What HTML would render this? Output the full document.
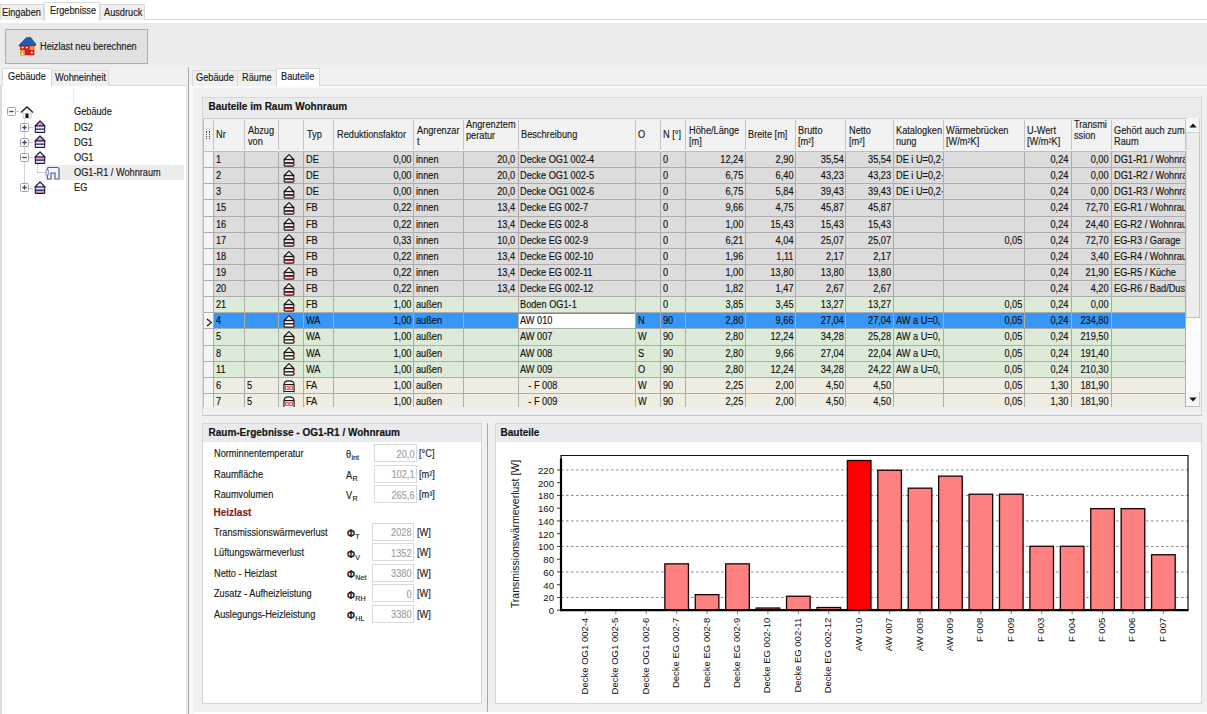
<!DOCTYPE html><html><head><meta charset="utf-8"><style>
*{margin:0;padding:0;box-sizing:border-box}
html,body{width:1207px;height:714px;overflow:hidden;background:#fff}
body{position:relative;font-family:"Liberation Sans",sans-serif;font-size:9.2px;color:#1a1a1a}
div{position:absolute}
.t{white-space:nowrap;line-height:12px;-webkit-text-stroke-width:0.15px;font-size:10.0px;transform:scaleX(0.92);transform-origin:0 0}
.r{transform-origin:100% 0}
.num{}
.ns{transform:none}
.b{font-weight:bold;font-size:10px;color:#111}
svg{position:absolute}
</style></head><body><div style="left:0px;top:19px;width:1207px;height:1px;background:#d9d9d9"></div>
<div style="left:0px;top:4px;width:44px;height:16px;background:#f0f0f0;border:1px solid #d9d9d9;border-bottom:none"></div>
<div style="left:100px;top:4px;width:45px;height:16px;background:#f0f0f0;border:1px solid #d9d9d9;border-bottom:none"></div>
<div style="left:44px;top:2px;width:56px;height:19px;background:#fff;border:1px solid #d9d9d9;border-bottom:none"></div>
<div class="t " style="left:2px;top:7px;">Eingaben</div>
<div class="t " style="left:49.5px;top:4.8px;">Ergebnisse</div>
<div class="t " style="left:104px;top:7px;">Ausdruck</div>
<div style="left:0px;top:22.5px;width:1207px;height:43px;background:#ebebee"></div>
<div style="left:0px;top:65px;width:1207px;height:3px;background:#efeff0"></div>
<div style="left:5px;top:29px;width:143px;height:35px;background:#e1e1e1;border:1px solid #adadad"></div>
<div class="t " style="left:40px;top:40.5px;">Heizlast neu berechnen</div>
<svg style="left:18px;top:36px" width="19" height="20" viewBox="0 0 19 20">
<rect x="2" y="9" width="14.4" height="10.3" fill="#d61c26"/>
<rect x="11.6" y="9" width="4.8" height="5" fill="#e8962a"/>
<rect x="2" y="14" width="4.8" height="5.3" fill="#e9a235"/>
<path d="M0.8 9.6 L7.6 2.6 Q8.6 0.8 10 2 Q11.6 0.6 13 2 L17.8 8.2 L17.4 9.6 Z" fill="#1f5cb4" stroke="#153f85" stroke-width="0.8"/>
<circle cx="4.6" cy="11.4" r="1" fill="#fff"/><circle cx="8.8" cy="11.4" r="1" fill="#fff"/><circle cx="13.8" cy="16.4" r="1" fill="#fff"/>
<path d="M4.4 15.5 L3.4 19 H5.4Z" fill="#fff4d8"/>
</svg>
<div style="left:0px;top:68px;width:187px;height:18px;background:#f0f0f0"></div>
<div style="left:0px;top:85px;width:187px;height:629px;background:#fff;border-left:2px solid #dcdcdc"></div>
<div style="left:0px;top:85px;width:187px;height:1px;background:#dadada"></div>
<div style="left:51px;top:70px;width:58px;height:16px;background:#f0f0f0;border:1px solid #d9d9d9;border-bottom:none"></div>
<div style="left:2px;top:68px;width:50px;height:18px;background:#fff;border:1px solid #d9d9d9;border-bottom:none"></div>
<div class="t " style="left:8px;top:71px;">Gebäude</div>
<div class="t " style="left:55px;top:72px;">Wohneinheit</div>
<div style="left:73px;top:88px;width:1px;height:16px;background:#ececec"></div>
<div style="left:187px;top:66px;width:7px;height:648px;background:#f0f0f0"></div>
<div style="left:188px;top:67px;width:1px;height:647px;background:#a8a8a8"></div>
<div style="left:186px;top:85px;width:1px;height:629px;background:#e4e4e4"></div>
<div style="left:190px;top:85px;width:3px;height:629px;background:#fbfbfb"></div>
<div style="left:45px;top:165px;width:139px;height:15px;background:#ececec"></div>
<div style="left:23.5px;top:116px;width:1px;height:72px;background:#d4d4d4"></div>
<div class="t " style="left:74px;top:106.2px;">Gebäude</div>
<div class="t " style="left:74px;top:121.7px;">DG2</div>
<div class="t " style="left:74px;top:136.7px;">DG1</div>
<div class="t " style="left:74px;top:152.0px;">OG1</div>
<div class="t " style="left:74px;top:167.2px;">OG1-R1 / Wohnraum</div>
<div class="t " style="left:74px;top:182.39999999999998px;">EG</div>
<svg style="left:6.5px;top:107.0px" width="9" height="9" viewBox="0 0 9 9"><rect x="0.5" y="0.5" width="8" height="8" rx="1" fill="#fafafa" stroke="#a4a4a4" stroke-width="1"/><path d="M2.3 4.5h4.4" stroke="#45457a" stroke-width="1.3"/></svg>
<svg style="left:19.5px;top:122.5px" width="9" height="9" viewBox="0 0 9 9"><rect x="0.5" y="0.5" width="8" height="8" rx="1" fill="#fafafa" stroke="#a4a4a4" stroke-width="1"/><path d="M2.3 4.5h4.4 M4.5 2.3v4.4" stroke="#45457a" stroke-width="1.3"/></svg>
<div style="left:29px;top:127px;width:4px;height:1px;background:#c8c8c8"></div>
<svg style="left:19.5px;top:137.5px" width="9" height="9" viewBox="0 0 9 9"><rect x="0.5" y="0.5" width="8" height="8" rx="1" fill="#fafafa" stroke="#a4a4a4" stroke-width="1"/><path d="M2.3 4.5h4.4 M4.5 2.3v4.4" stroke="#45457a" stroke-width="1.3"/></svg>
<div style="left:29px;top:142px;width:4px;height:1px;background:#c8c8c8"></div>
<svg style="left:19.5px;top:152.8px" width="9" height="9" viewBox="0 0 9 9"><rect x="0.5" y="0.5" width="8" height="8" rx="1" fill="#fafafa" stroke="#a4a4a4" stroke-width="1"/><path d="M2.3 4.5h4.4" stroke="#45457a" stroke-width="1.3"/></svg>
<div style="left:29px;top:157.3px;width:4px;height:1px;background:#c8c8c8"></div>
<svg style="left:19.5px;top:183.2px" width="9" height="9" viewBox="0 0 9 9"><rect x="0.5" y="0.5" width="8" height="8" rx="1" fill="#fafafa" stroke="#a4a4a4" stroke-width="1"/><path d="M2.3 4.5h4.4 M4.5 2.3v4.4" stroke="#45457a" stroke-width="1.3"/></svg>
<div style="left:29px;top:187.7px;width:4px;height:1px;background:#c8c8c8"></div>
<div style="left:15px;top:111px;width:4px;height:1px;background:#c8c8c8"></div>
<div style="left:37px;top:164px;width:0px;height:8px;border-left:1px dotted #b8b8b8"></div>
<div style="left:37px;top:172px;width:8px;height:1px;background:#c8c8c8"></div>
<svg style="left:20px;top:106px" width="14" height="13" viewBox="0 0 14 13"><path d="M1 6.5 L7 1 L13 6.5" fill="none" stroke="#222" stroke-width="1.4"/><path d="M3 6 V12 H11 V6" fill="#f4f4f4" stroke="#ccc"/><rect x="5.5" y="7.5" width="3" height="4.5" fill="#111"/></svg>
<svg style="left:34px;top:120.4px" width="12" height="13" viewBox="0 0 12 13"><path d="M1 6 L6 1 L11 6 Z" fill="#e9a0ae" stroke="#1c1c50" stroke-width="1.2" stroke-linejoin="round"/><rect x="1.3" y="6" width="9.4" height="3.2" rx="0.5" fill="#dfe6f6" stroke="#1c1c50" stroke-width="1.1"/><rect x="1.3" y="9.2" width="9.4" height="3.2" rx="0.5" fill="#fff" stroke="#1c1c50" stroke-width="1.1"/></svg>
<svg style="left:34px;top:135.4px" width="12" height="13" viewBox="0 0 12 13"><path d="M1 6 L6 1 L11 6 Z" fill="#e9a0ae" stroke="#1c1c50" stroke-width="1.2" stroke-linejoin="round"/><rect x="1.3" y="6" width="9.4" height="3.2" rx="0.5" fill="#dfe6f6" stroke="#1c1c50" stroke-width="1.1"/><rect x="1.3" y="9.2" width="9.4" height="3.2" rx="0.5" fill="#fff" stroke="#1c1c50" stroke-width="1.1"/></svg>
<svg style="left:34px;top:150.7px" width="12" height="13" viewBox="0 0 12 13"><path d="M1 6 L6 1 L11 6 Z" fill="#fff" stroke="#1c1c50" stroke-width="1.2" stroke-linejoin="round"/><rect x="1.3" y="6" width="9.4" height="3.2" rx="0.5" fill="#e6a2b6" stroke="#1c1c50" stroke-width="1.1"/><rect x="1.3" y="9.2" width="9.4" height="3.2" rx="0.5" fill="#f2eaf6" stroke="#1c1c50" stroke-width="1.1"/></svg>
<svg style="left:34px;top:181.1px" width="12" height="13" viewBox="0 0 12 13"><path d="M1 6 L6 1 L11 6 Z" fill="#fff" stroke="#1c1c50" stroke-width="1.2" stroke-linejoin="round"/><rect x="1.3" y="6" width="9.4" height="3.2" rx="0.5" fill="#d7dff3" stroke="#1c1c50" stroke-width="1.1"/><rect x="1.3" y="9.2" width="9.4" height="3.2" rx="0.5" fill="#e6a2b6" stroke="#1c1c50" stroke-width="1.1"/></svg>
<svg style="left:45px;top:166px" width="15" height="14" viewBox="0 0 15 14"><path d="M3 1.5 H12 Q14 1.5 14 3.5 V13 H10 V7 H6 V13 H2.5 V3.5 Q2.5 1.5 3 1.5Z" fill="#f4f6fb" stroke="#4a5a8a" stroke-width="1.1"/><rect x="1" y="4" width="2.5" height="5" fill="#dde3f0" stroke="#8090b0" stroke-width="0.8"/></svg>
<div style="left:193px;top:68px;width:1014px;height:18px;background:#f0f0f0"></div>
<div style="left:193px;top:85px;width:1014px;height:1px;background:#d9d9d9"></div>
<div style="left:193px;top:86px;width:1014px;height:2px;background:#fafafa"></div>
<div style="left:193px;top:88px;width:1014px;height:624px;background:#f0f0f0"></div>
<div style="left:191.5px;top:70px;width:46px;height:16px;background:#f0f0f0;border:1px solid #d9d9d9;border-bottom:none"></div>
<div style="left:237px;top:70px;width:40px;height:16px;background:#f0f0f0;border:1px solid #d9d9d9;border-bottom:none"></div>
<div style="left:276px;top:68px;width:44px;height:18px;background:#fff;border:1px solid #d9d9d9;border-bottom:none"></div>
<div class="t " style="left:196px;top:72.3px;">Gebäude</div>
<div class="t " style="left:242px;top:72.3px;">Räume</div>
<div class="t " style="left:281px;top:71px;">Bauteile</div>
<div style="left:202px;top:97px;width:999.5px;height:318.5px;background:#f0f0f0;border:1px solid #d6d6d6"></div>
<div style="left:203px;top:98px;width:997.5px;height:19.5px;background:#ebebee"></div>
<div class="t ns" style="left:208.5px;top:101.1px;font-weight:bold;font-size:10px;color:#111">Bauteile im Raum Wohnraum</div>
<div style="left:203px;top:117.5px;width:996.5px;height:289.3px;overflow:hidden;background:#fff">
<div style="left:0;top:0;width:982.5999999999999px;height:34.5px;background:#f2f2f2;border-top:1px solid #c8c8c8"></div>
<div style="left:0px;top:33.5px;width:10.599999999999994px;height:1px;background:#bdbdbd"></div>
<div style="left:10.099999999999994px;top:2px;width:1px;height:30.5px;background:#c4c4c4"></div>
<div style="left:10.599999999999994px;top:33.5px;width:31.099999999999994px;height:1px;background:#bdbdbd"></div>
<div style="left:41.19999999999999px;top:2px;width:1px;height:30.5px;background:#c4c4c4"></div>
<div class="t" style="left:13.399999999999995px;top:11.6px;line-height:11px;color:#1a1a1a">Nr</div>
<div style="left:41.69999999999999px;top:33.5px;width:33.80000000000001px;height:1px;background:#bdbdbd"></div>
<div style="left:75.0px;top:2px;width:1px;height:30.5px;background:#c4c4c4"></div>
<div class="t" style="left:44.499999999999986px;top:7.4px;line-height:11px;color:#1a1a1a">Abzug<br>von</div>
<div style="left:75.5px;top:33.5px;width:25.30000000000001px;height:1px;background:#bdbdbd"></div>
<div style="left:100.30000000000001px;top:2px;width:1px;height:30.5px;background:#c4c4c4"></div>
<div style="left:100.80000000000001px;top:33.5px;width:30.0px;height:1px;background:#bdbdbd"></div>
<div style="left:130.3px;top:2px;width:1px;height:30.5px;background:#c4c4c4"></div>
<div class="t" style="left:103.60000000000001px;top:11.6px;line-height:11px;color:#1a1a1a">Typ</div>
<div style="left:130.8px;top:33.5px;width:79.89999999999998px;height:1px;background:#bdbdbd"></div>
<div style="left:210.2px;top:2px;width:1px;height:30.5px;background:#c4c4c4"></div>
<div class="t" style="left:133.60000000000002px;top:11.6px;line-height:11px;color:#1a1a1a">Reduktionsfaktor</div>
<div style="left:210.7px;top:33.5px;width:49.69999999999999px;height:1px;background:#bdbdbd"></div>
<div style="left:259.9px;top:2px;width:1px;height:30.5px;background:#c4c4c4"></div>
<div class="t" style="left:213.5px;top:7.4px;line-height:11px;color:#1a1a1a">Angrenzar<br>t</div>
<div style="left:260.4px;top:33.5px;width:54.60000000000002px;height:1px;background:#bdbdbd"></div>
<div style="left:314.5px;top:2px;width:1px;height:30.5px;background:#c4c4c4"></div>
<div class="t" style="left:263.2px;top:1.4px;line-height:11px;color:#1a1a1a">Angrenztem<br>peratur</div>
<div style="left:315px;top:33.5px;width:117.39999999999998px;height:1px;background:#bdbdbd"></div>
<div style="left:431.9px;top:2px;width:1px;height:30.5px;background:#c4c4c4"></div>
<div class="t" style="left:317.8px;top:11.6px;line-height:11px;color:#1a1a1a">Beschreibung</div>
<div style="left:432.4px;top:33.5px;width:25.100000000000023px;height:1px;background:#bdbdbd"></div>
<div style="left:457.0px;top:2px;width:1px;height:30.5px;background:#c4c4c4"></div>
<div class="t" style="left:435.2px;top:11.6px;line-height:11px;color:#1a1a1a">O</div>
<div style="left:457.5px;top:33.5px;width:25.200000000000045px;height:1px;background:#bdbdbd"></div>
<div style="left:482.20000000000005px;top:2px;width:1px;height:30.5px;background:#c4c4c4"></div>
<div class="t" style="left:460.3px;top:11.6px;line-height:11px;color:#1a1a1a">N [°]</div>
<div style="left:482.70000000000005px;top:33.5px;width:59.799999999999955px;height:1px;background:#bdbdbd"></div>
<div style="left:542.0px;top:2px;width:1px;height:30.5px;background:#c4c4c4"></div>
<div class="t" style="left:485.50000000000006px;top:7.4px;line-height:11px;color:#1a1a1a">Höhe/Länge<br>[m]</div>
<div style="left:542.5px;top:33.5px;width:50.0px;height:1px;background:#bdbdbd"></div>
<div style="left:592.0px;top:2px;width:1px;height:30.5px;background:#c4c4c4"></div>
<div class="t" style="left:545.3px;top:11.6px;line-height:11px;color:#1a1a1a">Breite [m]</div>
<div style="left:592.5px;top:33.5px;width:50.299999999999955px;height:1px;background:#bdbdbd"></div>
<div style="left:642.3px;top:2px;width:1px;height:30.5px;background:#c4c4c4"></div>
<div class="t" style="left:595.3px;top:7.4px;line-height:11px;color:#1a1a1a">Brutto<br>[m²]</div>
<div style="left:642.8px;top:33.5px;width:47.60000000000002px;height:1px;background:#bdbdbd"></div>
<div style="left:689.9px;top:2px;width:1px;height:30.5px;background:#c4c4c4"></div>
<div class="t" style="left:645.5999999999999px;top:7.4px;line-height:11px;color:#1a1a1a">Netto<br>[m²]</div>
<div style="left:690.4px;top:33.5px;width:50.200000000000045px;height:1px;background:#bdbdbd"></div>
<div style="left:740.1px;top:2px;width:1px;height:30.5px;background:#c4c4c4"></div>
<div class="t" style="left:693.1999999999999px;top:7.4px;line-height:11px;color:#1a1a1a">Katalogken<br>nung</div>
<div style="left:740.6px;top:33.5px;width:80.80000000000007px;height:1px;background:#bdbdbd"></div>
<div style="left:820.9000000000001px;top:2px;width:1px;height:30.5px;background:#c4c4c4"></div>
<div class="t" style="left:743.4px;top:7.4px;line-height:11px;color:#1a1a1a">Wärmebrücken<br>[W/m²K]</div>
<div style="left:821.4000000000001px;top:33.5px;width:46.899999999999864px;height:1px;background:#bdbdbd"></div>
<div style="left:867.8px;top:2px;width:1px;height:30.5px;background:#c4c4c4"></div>
<div class="t" style="left:824.2px;top:7.4px;line-height:11px;color:#1a1a1a">U-Wert<br>[W/m²K]</div>
<div style="left:868.3px;top:33.5px;width:40.100000000000136px;height:1px;background:#bdbdbd"></div>
<div style="left:907.9000000000001px;top:2px;width:1px;height:30.5px;background:#c4c4c4"></div>
<div class="t" style="left:871.0999999999999px;top:1.4px;line-height:11px;color:#1a1a1a">Transmi<br>ssion</div>
<div style="left:908.4000000000001px;top:33.5px;width:74.19999999999982px;height:1px;background:#bdbdbd"></div>
<div style="left:982.0999999999999px;top:2px;width:1px;height:30.5px;background:#c4c4c4"></div>
<div class="t" style="left:911.2px;top:7.4px;line-height:11px;color:#1a1a1a">Gehört auch zum<br>Raum</div>
<div style="left:2.5px;top:13px;width:4px;height:8px;border-left:1.5px dotted #444;border-right:1.5px dotted #444"></div>
<div style="left:0;top:34.5px;width:10.599999999999994px;height:16.13px;background:#f5f5f5"></div>
<div style="left:10.599999999999994px;top:34.5px;width:971.9999999999999px;height:16.13px;background:#dcdcdc"></div>
<div style="left:0;top:49.629999999999995px;width:982.5999999999999px;height:1px;background:#adadad"></div>
<div class="t num" style="left:12.799999999999994px;width:31.63043478260869px;overflow:hidden;top:36.5px;color:#111">1</div>
<div style="left:79.05000000000001px;top:35.3px"><svg width="14" height="14" viewBox="0 0 13 13"><path d="M2 6 L6.5 1.5 L11 6 Z" fill="#fff" stroke="#1a1a1a" stroke-width="1.1" stroke-linejoin="round"/><rect x="2" y="6.2" width="9" height="2.8" rx="0.8" fill="#fff" stroke="#1a1a1a" stroke-width="1.05"/><rect x="2" y="9.2" width="9" height="3" rx="0.8" fill="#ffd4d4" stroke="#1a1a1a" stroke-width="1.05"/><path d="M2.6 9.6 H10.4" stroke="#b01010" stroke-width="1"/></svg></div>
<div class="t" style="left:103.00000000000001px;width:30.434782608695652px;overflow:hidden;top:36.5px;color:#111">DE</div>
<div class="t r num" style="left:130.8px;width:77.39999999999998px;text-align:right;top:36.5px;color:#111">0,00</div>
<div class="t" style="left:212.89999999999998px;width:51.84782608695651px;overflow:hidden;top:36.5px;color:#111">innen</div>
<div class="t r num" style="left:260.4px;width:52.10000000000002px;text-align:right;top:36.5px;color:#111">20,0</div>
<div class="t" style="left:317.2px;width:125.43478260869563px;overflow:hidden;top:36.5px;color:#111">Decke OG1 002-4</div>
<div class="t num" style="left:459.7px;width:25.217391304347874px;overflow:hidden;top:36.5px;color:#111">0</div>
<div class="t r num" style="left:482.70000000000005px;width:57.299999999999955px;text-align:right;top:36.5px;color:#111">12,24</div>
<div class="t r num" style="left:542.5px;width:47.5px;text-align:right;top:36.5px;color:#111">2,90</div>
<div class="t r num" style="left:592.5px;width:47.799999999999955px;text-align:right;top:36.5px;color:#111">35,54</div>
<div class="t r num" style="left:642.8px;width:45.10000000000002px;text-align:right;top:36.5px;color:#111">35,54</div>
<div class="t" style="left:692.6px;width:52.391304347826136px;overflow:hidden;top:36.5px;color:#111">DE i U=0,2·</div>
<div class="t r num" style="left:821.4000000000001px;width:44.399999999999864px;text-align:right;top:36.5px;color:#111">0,24</div>
<div class="t r num" style="left:868.3px;width:37.600000000000136px;text-align:right;top:36.5px;color:#111">0,00</div>
<div class="t" style="left:910.6000000000001px;width:78.47826086956502px;overflow:hidden;top:36.5px;color:#111">DG1-R1 / Wohnra</div>
<div style="left:0;top:50.629999999999995px;width:10.599999999999994px;height:16.13px;background:#f5f5f5"></div>
<div style="left:10.599999999999994px;top:50.629999999999995px;width:971.9999999999999px;height:16.13px;background:#dcdcdc"></div>
<div style="left:0;top:65.75999999999999px;width:982.5999999999999px;height:1px;background:#adadad"></div>
<div class="t num" style="left:12.799999999999994px;width:31.63043478260869px;overflow:hidden;top:52.629999999999995px;color:#111">2</div>
<div style="left:79.05000000000001px;top:51.42999999999999px"><svg width="14" height="14" viewBox="0 0 13 13"><path d="M2 6 L6.5 1.5 L11 6 Z" fill="#fff" stroke="#1a1a1a" stroke-width="1.1" stroke-linejoin="round"/><rect x="2" y="6.2" width="9" height="2.8" rx="0.8" fill="#fff" stroke="#1a1a1a" stroke-width="1.05"/><rect x="2" y="9.2" width="9" height="3" rx="0.8" fill="#ffd4d4" stroke="#1a1a1a" stroke-width="1.05"/><path d="M2.6 9.6 H10.4" stroke="#b01010" stroke-width="1"/></svg></div>
<div class="t" style="left:103.00000000000001px;width:30.434782608695652px;overflow:hidden;top:52.629999999999995px;color:#111">DE</div>
<div class="t r num" style="left:130.8px;width:77.39999999999998px;text-align:right;top:52.629999999999995px;color:#111">0,00</div>
<div class="t" style="left:212.89999999999998px;width:51.84782608695651px;overflow:hidden;top:52.629999999999995px;color:#111">innen</div>
<div class="t r num" style="left:260.4px;width:52.10000000000002px;text-align:right;top:52.629999999999995px;color:#111">20,0</div>
<div class="t" style="left:317.2px;width:125.43478260869563px;overflow:hidden;top:52.629999999999995px;color:#111">Decke OG1 002-5</div>
<div class="t num" style="left:459.7px;width:25.217391304347874px;overflow:hidden;top:52.629999999999995px;color:#111">0</div>
<div class="t r num" style="left:482.70000000000005px;width:57.299999999999955px;text-align:right;top:52.629999999999995px;color:#111">6,75</div>
<div class="t r num" style="left:542.5px;width:47.5px;text-align:right;top:52.629999999999995px;color:#111">6,40</div>
<div class="t r num" style="left:592.5px;width:47.799999999999955px;text-align:right;top:52.629999999999995px;color:#111">43,23</div>
<div class="t r num" style="left:642.8px;width:45.10000000000002px;text-align:right;top:52.629999999999995px;color:#111">43,23</div>
<div class="t" style="left:692.6px;width:52.391304347826136px;overflow:hidden;top:52.629999999999995px;color:#111">DE i U=0,2·</div>
<div class="t r num" style="left:821.4000000000001px;width:44.399999999999864px;text-align:right;top:52.629999999999995px;color:#111">0,24</div>
<div class="t r num" style="left:868.3px;width:37.600000000000136px;text-align:right;top:52.629999999999995px;color:#111">0,00</div>
<div class="t" style="left:910.6000000000001px;width:78.47826086956502px;overflow:hidden;top:52.629999999999995px;color:#111">DG1-R2 / Wohnra</div>
<div style="left:0;top:66.75999999999999px;width:10.599999999999994px;height:16.13px;background:#f5f5f5"></div>
<div style="left:10.599999999999994px;top:66.75999999999999px;width:971.9999999999999px;height:16.13px;background:#dcdcdc"></div>
<div style="left:0;top:81.88999999999999px;width:982.5999999999999px;height:1px;background:#adadad"></div>
<div class="t num" style="left:12.799999999999994px;width:31.63043478260869px;overflow:hidden;top:68.75999999999999px;color:#111">3</div>
<div style="left:79.05000000000001px;top:67.55999999999999px"><svg width="14" height="14" viewBox="0 0 13 13"><path d="M2 6 L6.5 1.5 L11 6 Z" fill="#fff" stroke="#1a1a1a" stroke-width="1.1" stroke-linejoin="round"/><rect x="2" y="6.2" width="9" height="2.8" rx="0.8" fill="#fff" stroke="#1a1a1a" stroke-width="1.05"/><rect x="2" y="9.2" width="9" height="3" rx="0.8" fill="#ffd4d4" stroke="#1a1a1a" stroke-width="1.05"/><path d="M2.6 9.6 H10.4" stroke="#b01010" stroke-width="1"/></svg></div>
<div class="t" style="left:103.00000000000001px;width:30.434782608695652px;overflow:hidden;top:68.75999999999999px;color:#111">DE</div>
<div class="t r num" style="left:130.8px;width:77.39999999999998px;text-align:right;top:68.75999999999999px;color:#111">0,00</div>
<div class="t" style="left:212.89999999999998px;width:51.84782608695651px;overflow:hidden;top:68.75999999999999px;color:#111">innen</div>
<div class="t r num" style="left:260.4px;width:52.10000000000002px;text-align:right;top:68.75999999999999px;color:#111">20,0</div>
<div class="t" style="left:317.2px;width:125.43478260869563px;overflow:hidden;top:68.75999999999999px;color:#111">Decke OG1 002-6</div>
<div class="t num" style="left:459.7px;width:25.217391304347874px;overflow:hidden;top:68.75999999999999px;color:#111">0</div>
<div class="t r num" style="left:482.70000000000005px;width:57.299999999999955px;text-align:right;top:68.75999999999999px;color:#111">6,75</div>
<div class="t r num" style="left:542.5px;width:47.5px;text-align:right;top:68.75999999999999px;color:#111">5,84</div>
<div class="t r num" style="left:592.5px;width:47.799999999999955px;text-align:right;top:68.75999999999999px;color:#111">39,43</div>
<div class="t r num" style="left:642.8px;width:45.10000000000002px;text-align:right;top:68.75999999999999px;color:#111">39,43</div>
<div class="t" style="left:692.6px;width:52.391304347826136px;overflow:hidden;top:68.75999999999999px;color:#111">DE i U=0,2·</div>
<div class="t r num" style="left:821.4000000000001px;width:44.399999999999864px;text-align:right;top:68.75999999999999px;color:#111">0,24</div>
<div class="t r num" style="left:868.3px;width:37.600000000000136px;text-align:right;top:68.75999999999999px;color:#111">0,00</div>
<div class="t" style="left:910.6000000000001px;width:78.47826086956502px;overflow:hidden;top:68.75999999999999px;color:#111">DG1-R3 / Wohnra</div>
<div style="left:0;top:82.88999999999999px;width:10.599999999999994px;height:16.13px;background:#f5f5f5"></div>
<div style="left:10.599999999999994px;top:82.88999999999999px;width:971.9999999999999px;height:16.13px;background:#dcdcdc"></div>
<div style="left:0;top:98.01999999999998px;width:982.5999999999999px;height:1px;background:#adadad"></div>
<div class="t num" style="left:12.799999999999994px;width:31.63043478260869px;overflow:hidden;top:84.88999999999999px;color:#111">15</div>
<div style="left:79.05000000000001px;top:83.68999999999998px"><svg width="14" height="14" viewBox="0 0 13 13"><path d="M2 6 L6.5 1.5 L11 6 Z" fill="#fff" stroke="#1a1a1a" stroke-width="1.1" stroke-linejoin="round"/><rect x="2" y="6.2" width="9" height="2.8" rx="0.8" fill="#fff" stroke="#1a1a1a" stroke-width="1.05"/><rect x="2" y="9.2" width="9" height="3" rx="0.8" fill="#ffd4d4" stroke="#1a1a1a" stroke-width="1.05"/><path d="M2.6 9.6 H10.4" stroke="#b01010" stroke-width="1"/></svg></div>
<div class="t" style="left:103.00000000000001px;width:30.434782608695652px;overflow:hidden;top:84.88999999999999px;color:#111">FB</div>
<div class="t r num" style="left:130.8px;width:77.39999999999998px;text-align:right;top:84.88999999999999px;color:#111">0,22</div>
<div class="t" style="left:212.89999999999998px;width:51.84782608695651px;overflow:hidden;top:84.88999999999999px;color:#111">innen</div>
<div class="t r num" style="left:260.4px;width:52.10000000000002px;text-align:right;top:84.88999999999999px;color:#111">13,4</div>
<div class="t" style="left:317.2px;width:125.43478260869563px;overflow:hidden;top:84.88999999999999px;color:#111">Decke EG 002-7</div>
<div class="t num" style="left:459.7px;width:25.217391304347874px;overflow:hidden;top:84.88999999999999px;color:#111">0</div>
<div class="t r num" style="left:482.70000000000005px;width:57.299999999999955px;text-align:right;top:84.88999999999999px;color:#111">9,66</div>
<div class="t r num" style="left:542.5px;width:47.5px;text-align:right;top:84.88999999999999px;color:#111">4,75</div>
<div class="t r num" style="left:592.5px;width:47.799999999999955px;text-align:right;top:84.88999999999999px;color:#111">45,87</div>
<div class="t r num" style="left:642.8px;width:45.10000000000002px;text-align:right;top:84.88999999999999px;color:#111">45,87</div>
<div class="t r num" style="left:821.4000000000001px;width:44.399999999999864px;text-align:right;top:84.88999999999999px;color:#111">0,24</div>
<div class="t r num" style="left:868.3px;width:37.600000000000136px;text-align:right;top:84.88999999999999px;color:#111">72,70</div>
<div class="t" style="left:910.6000000000001px;width:78.47826086956502px;overflow:hidden;top:84.88999999999999px;color:#111">EG-R1 / Wohnrau</div>
<div style="left:0;top:99.01999999999998px;width:10.599999999999994px;height:16.13px;background:#f5f5f5"></div>
<div style="left:10.599999999999994px;top:99.01999999999998px;width:971.9999999999999px;height:16.13px;background:#dcdcdc"></div>
<div style="left:0;top:114.14999999999998px;width:982.5999999999999px;height:1px;background:#adadad"></div>
<div class="t num" style="left:12.799999999999994px;width:31.63043478260869px;overflow:hidden;top:101.01999999999998px;color:#111">16</div>
<div style="left:79.05000000000001px;top:99.81999999999998px"><svg width="14" height="14" viewBox="0 0 13 13"><path d="M2 6 L6.5 1.5 L11 6 Z" fill="#fff" stroke="#1a1a1a" stroke-width="1.1" stroke-linejoin="round"/><rect x="2" y="6.2" width="9" height="2.8" rx="0.8" fill="#fff" stroke="#1a1a1a" stroke-width="1.05"/><rect x="2" y="9.2" width="9" height="3" rx="0.8" fill="#ffd4d4" stroke="#1a1a1a" stroke-width="1.05"/><path d="M2.6 9.6 H10.4" stroke="#b01010" stroke-width="1"/></svg></div>
<div class="t" style="left:103.00000000000001px;width:30.434782608695652px;overflow:hidden;top:101.01999999999998px;color:#111">FB</div>
<div class="t r num" style="left:130.8px;width:77.39999999999998px;text-align:right;top:101.01999999999998px;color:#111">0,22</div>
<div class="t" style="left:212.89999999999998px;width:51.84782608695651px;overflow:hidden;top:101.01999999999998px;color:#111">innen</div>
<div class="t r num" style="left:260.4px;width:52.10000000000002px;text-align:right;top:101.01999999999998px;color:#111">13,4</div>
<div class="t" style="left:317.2px;width:125.43478260869563px;overflow:hidden;top:101.01999999999998px;color:#111">Decke EG 002-8</div>
<div class="t num" style="left:459.7px;width:25.217391304347874px;overflow:hidden;top:101.01999999999998px;color:#111">0</div>
<div class="t r num" style="left:482.70000000000005px;width:57.299999999999955px;text-align:right;top:101.01999999999998px;color:#111">1,00</div>
<div class="t r num" style="left:542.5px;width:47.5px;text-align:right;top:101.01999999999998px;color:#111">15,43</div>
<div class="t r num" style="left:592.5px;width:47.799999999999955px;text-align:right;top:101.01999999999998px;color:#111">15,43</div>
<div class="t r num" style="left:642.8px;width:45.10000000000002px;text-align:right;top:101.01999999999998px;color:#111">15,43</div>
<div class="t r num" style="left:821.4000000000001px;width:44.399999999999864px;text-align:right;top:101.01999999999998px;color:#111">0,24</div>
<div class="t r num" style="left:868.3px;width:37.600000000000136px;text-align:right;top:101.01999999999998px;color:#111">24,40</div>
<div class="t" style="left:910.6000000000001px;width:78.47826086956502px;overflow:hidden;top:101.01999999999998px;color:#111">EG-R2 / Wohnrau</div>
<div style="left:0;top:115.14999999999998px;width:10.599999999999994px;height:16.13px;background:#f5f5f5"></div>
<div style="left:10.599999999999994px;top:115.14999999999998px;width:971.9999999999999px;height:16.13px;background:#dcdcdc"></div>
<div style="left:0;top:130.27999999999997px;width:982.5999999999999px;height:1px;background:#adadad"></div>
<div class="t num" style="left:12.799999999999994px;width:31.63043478260869px;overflow:hidden;top:117.14999999999998px;color:#111">17</div>
<div style="left:79.05000000000001px;top:115.94999999999997px"><svg width="14" height="14" viewBox="0 0 13 13"><path d="M2 6 L6.5 1.5 L11 6 Z" fill="#fff" stroke="#1a1a1a" stroke-width="1.1" stroke-linejoin="round"/><rect x="2" y="6.2" width="9" height="2.8" rx="0.8" fill="#fff" stroke="#1a1a1a" stroke-width="1.05"/><rect x="2" y="9.2" width="9" height="3" rx="0.8" fill="#ffd4d4" stroke="#1a1a1a" stroke-width="1.05"/><path d="M2.6 9.6 H10.4" stroke="#b01010" stroke-width="1"/></svg></div>
<div class="t" style="left:103.00000000000001px;width:30.434782608695652px;overflow:hidden;top:117.14999999999998px;color:#111">FB</div>
<div class="t r num" style="left:130.8px;width:77.39999999999998px;text-align:right;top:117.14999999999998px;color:#111">0,33</div>
<div class="t" style="left:212.89999999999998px;width:51.84782608695651px;overflow:hidden;top:117.14999999999998px;color:#111">innen</div>
<div class="t r num" style="left:260.4px;width:52.10000000000002px;text-align:right;top:117.14999999999998px;color:#111">10,0</div>
<div class="t" style="left:317.2px;width:125.43478260869563px;overflow:hidden;top:117.14999999999998px;color:#111">Decke EG 002-9</div>
<div class="t num" style="left:459.7px;width:25.217391304347874px;overflow:hidden;top:117.14999999999998px;color:#111">0</div>
<div class="t r num" style="left:482.70000000000005px;width:57.299999999999955px;text-align:right;top:117.14999999999998px;color:#111">6,21</div>
<div class="t r num" style="left:542.5px;width:47.5px;text-align:right;top:117.14999999999998px;color:#111">4,04</div>
<div class="t r num" style="left:592.5px;width:47.799999999999955px;text-align:right;top:117.14999999999998px;color:#111">25,07</div>
<div class="t r num" style="left:642.8px;width:45.10000000000002px;text-align:right;top:117.14999999999998px;color:#111">25,07</div>
<div class="t r num" style="left:740.6px;width:78.30000000000007px;text-align:right;top:117.14999999999998px;color:#111">0,05</div>
<div class="t r num" style="left:821.4000000000001px;width:44.399999999999864px;text-align:right;top:117.14999999999998px;color:#111">0,24</div>
<div class="t r num" style="left:868.3px;width:37.600000000000136px;text-align:right;top:117.14999999999998px;color:#111">72,70</div>
<div class="t" style="left:910.6000000000001px;width:78.47826086956502px;overflow:hidden;top:117.14999999999998px;color:#111">EG-R3 / Garage</div>
<div style="left:0;top:131.28px;width:10.599999999999994px;height:16.13px;background:#f5f5f5"></div>
<div style="left:10.599999999999994px;top:131.28px;width:971.9999999999999px;height:16.13px;background:#dcdcdc"></div>
<div style="left:0;top:146.41px;width:982.5999999999999px;height:1px;background:#adadad"></div>
<div class="t num" style="left:12.799999999999994px;width:31.63043478260869px;overflow:hidden;top:133.28px;color:#111">18</div>
<div style="left:79.05000000000001px;top:132.08px"><svg width="14" height="14" viewBox="0 0 13 13"><path d="M2 6 L6.5 1.5 L11 6 Z" fill="#fff" stroke="#1a1a1a" stroke-width="1.1" stroke-linejoin="round"/><rect x="2" y="6.2" width="9" height="2.8" rx="0.8" fill="#fff" stroke="#1a1a1a" stroke-width="1.05"/><rect x="2" y="9.2" width="9" height="3" rx="0.8" fill="#ffd4d4" stroke="#1a1a1a" stroke-width="1.05"/><path d="M2.6 9.6 H10.4" stroke="#b01010" stroke-width="1"/></svg></div>
<div class="t" style="left:103.00000000000001px;width:30.434782608695652px;overflow:hidden;top:133.28px;color:#111">FB</div>
<div class="t r num" style="left:130.8px;width:77.39999999999998px;text-align:right;top:133.28px;color:#111">0,22</div>
<div class="t" style="left:212.89999999999998px;width:51.84782608695651px;overflow:hidden;top:133.28px;color:#111">innen</div>
<div class="t r num" style="left:260.4px;width:52.10000000000002px;text-align:right;top:133.28px;color:#111">13,4</div>
<div class="t" style="left:317.2px;width:125.43478260869563px;overflow:hidden;top:133.28px;color:#111">Decke EG 002-10</div>
<div class="t num" style="left:459.7px;width:25.217391304347874px;overflow:hidden;top:133.28px;color:#111">0</div>
<div class="t r num" style="left:482.70000000000005px;width:57.299999999999955px;text-align:right;top:133.28px;color:#111">1,96</div>
<div class="t r num" style="left:542.5px;width:47.5px;text-align:right;top:133.28px;color:#111">1,11</div>
<div class="t r num" style="left:592.5px;width:47.799999999999955px;text-align:right;top:133.28px;color:#111">2,17</div>
<div class="t r num" style="left:642.8px;width:45.10000000000002px;text-align:right;top:133.28px;color:#111">2,17</div>
<div class="t r num" style="left:821.4000000000001px;width:44.399999999999864px;text-align:right;top:133.28px;color:#111">0,24</div>
<div class="t r num" style="left:868.3px;width:37.600000000000136px;text-align:right;top:133.28px;color:#111">3,40</div>
<div class="t" style="left:910.6000000000001px;width:78.47826086956502px;overflow:hidden;top:133.28px;color:#111">EG-R4 / Wohnrau</div>
<div style="left:0;top:147.40999999999997px;width:10.599999999999994px;height:16.13px;background:#f5f5f5"></div>
<div style="left:10.599999999999994px;top:147.40999999999997px;width:971.9999999999999px;height:16.13px;background:#dcdcdc"></div>
<div style="left:0;top:162.53999999999996px;width:982.5999999999999px;height:1px;background:#adadad"></div>
<div class="t num" style="left:12.799999999999994px;width:31.63043478260869px;overflow:hidden;top:149.40999999999997px;color:#111">19</div>
<div style="left:79.05000000000001px;top:148.20999999999998px"><svg width="14" height="14" viewBox="0 0 13 13"><path d="M2 6 L6.5 1.5 L11 6 Z" fill="#fff" stroke="#1a1a1a" stroke-width="1.1" stroke-linejoin="round"/><rect x="2" y="6.2" width="9" height="2.8" rx="0.8" fill="#fff" stroke="#1a1a1a" stroke-width="1.05"/><rect x="2" y="9.2" width="9" height="3" rx="0.8" fill="#ffd4d4" stroke="#1a1a1a" stroke-width="1.05"/><path d="M2.6 9.6 H10.4" stroke="#b01010" stroke-width="1"/></svg></div>
<div class="t" style="left:103.00000000000001px;width:30.434782608695652px;overflow:hidden;top:149.40999999999997px;color:#111">FB</div>
<div class="t r num" style="left:130.8px;width:77.39999999999998px;text-align:right;top:149.40999999999997px;color:#111">0,22</div>
<div class="t" style="left:212.89999999999998px;width:51.84782608695651px;overflow:hidden;top:149.40999999999997px;color:#111">innen</div>
<div class="t r num" style="left:260.4px;width:52.10000000000002px;text-align:right;top:149.40999999999997px;color:#111">13,4</div>
<div class="t" style="left:317.2px;width:125.43478260869563px;overflow:hidden;top:149.40999999999997px;color:#111">Decke EG 002-11</div>
<div class="t num" style="left:459.7px;width:25.217391304347874px;overflow:hidden;top:149.40999999999997px;color:#111">0</div>
<div class="t r num" style="left:482.70000000000005px;width:57.299999999999955px;text-align:right;top:149.40999999999997px;color:#111">1,00</div>
<div class="t r num" style="left:542.5px;width:47.5px;text-align:right;top:149.40999999999997px;color:#111">13,80</div>
<div class="t r num" style="left:592.5px;width:47.799999999999955px;text-align:right;top:149.40999999999997px;color:#111">13,80</div>
<div class="t r num" style="left:642.8px;width:45.10000000000002px;text-align:right;top:149.40999999999997px;color:#111">13,80</div>
<div class="t r num" style="left:821.4000000000001px;width:44.399999999999864px;text-align:right;top:149.40999999999997px;color:#111">0,24</div>
<div class="t r num" style="left:868.3px;width:37.600000000000136px;text-align:right;top:149.40999999999997px;color:#111">21,90</div>
<div class="t" style="left:910.6000000000001px;width:78.47826086956502px;overflow:hidden;top:149.40999999999997px;color:#111">EG-R5 / Küche</div>
<div style="left:0;top:163.53999999999996px;width:10.599999999999994px;height:16.13px;background:#f5f5f5"></div>
<div style="left:10.599999999999994px;top:163.53999999999996px;width:971.9999999999999px;height:16.13px;background:#dcdcdc"></div>
<div style="left:0;top:178.66999999999996px;width:982.5999999999999px;height:1px;background:#adadad"></div>
<div class="t num" style="left:12.799999999999994px;width:31.63043478260869px;overflow:hidden;top:165.53999999999996px;color:#111">20</div>
<div style="left:79.05000000000001px;top:164.33999999999997px"><svg width="14" height="14" viewBox="0 0 13 13"><path d="M2 6 L6.5 1.5 L11 6 Z" fill="#fff" stroke="#1a1a1a" stroke-width="1.1" stroke-linejoin="round"/><rect x="2" y="6.2" width="9" height="2.8" rx="0.8" fill="#fff" stroke="#1a1a1a" stroke-width="1.05"/><rect x="2" y="9.2" width="9" height="3" rx="0.8" fill="#ffd4d4" stroke="#1a1a1a" stroke-width="1.05"/><path d="M2.6 9.6 H10.4" stroke="#b01010" stroke-width="1"/></svg></div>
<div class="t" style="left:103.00000000000001px;width:30.434782608695652px;overflow:hidden;top:165.53999999999996px;color:#111">FB</div>
<div class="t r num" style="left:130.8px;width:77.39999999999998px;text-align:right;top:165.53999999999996px;color:#111">0,22</div>
<div class="t" style="left:212.89999999999998px;width:51.84782608695651px;overflow:hidden;top:165.53999999999996px;color:#111">innen</div>
<div class="t r num" style="left:260.4px;width:52.10000000000002px;text-align:right;top:165.53999999999996px;color:#111">13,4</div>
<div class="t" style="left:317.2px;width:125.43478260869563px;overflow:hidden;top:165.53999999999996px;color:#111">Decke EG 002-12</div>
<div class="t num" style="left:459.7px;width:25.217391304347874px;overflow:hidden;top:165.53999999999996px;color:#111">0</div>
<div class="t r num" style="left:482.70000000000005px;width:57.299999999999955px;text-align:right;top:165.53999999999996px;color:#111">1,82</div>
<div class="t r num" style="left:542.5px;width:47.5px;text-align:right;top:165.53999999999996px;color:#111">1,47</div>
<div class="t r num" style="left:592.5px;width:47.799999999999955px;text-align:right;top:165.53999999999996px;color:#111">2,67</div>
<div class="t r num" style="left:642.8px;width:45.10000000000002px;text-align:right;top:165.53999999999996px;color:#111">2,67</div>
<div class="t r num" style="left:821.4000000000001px;width:44.399999999999864px;text-align:right;top:165.53999999999996px;color:#111">0,24</div>
<div class="t r num" style="left:868.3px;width:37.600000000000136px;text-align:right;top:165.53999999999996px;color:#111">4,20</div>
<div class="t" style="left:910.6000000000001px;width:78.47826086956502px;overflow:hidden;top:165.53999999999996px;color:#111">EG-R6 / Bad/Dusc</div>
<div style="left:0;top:179.66999999999996px;width:10.599999999999994px;height:16.13px;background:#f5f5f5"></div>
<div style="left:10.599999999999994px;top:179.66999999999996px;width:971.9999999999999px;height:16.13px;background:#dcebd8"></div>
<div style="left:0;top:194.79999999999995px;width:982.5999999999999px;height:1px;background:#adadad"></div>
<div class="t num" style="left:12.799999999999994px;width:31.63043478260869px;overflow:hidden;top:181.66999999999996px;color:#111">21</div>
<div style="left:79.05000000000001px;top:180.46999999999997px"><svg width="14" height="14" viewBox="0 0 13 13"><path d="M2 6 L6.5 1.5 L11 6 Z" fill="#fff" stroke="#1a1a1a" stroke-width="1.1" stroke-linejoin="round"/><rect x="2" y="6.2" width="9" height="2.8" rx="0.8" fill="#fff" stroke="#1a1a1a" stroke-width="1.05"/><rect x="2" y="9.2" width="9" height="3" rx="0.8" fill="#ffd4d4" stroke="#1a1a1a" stroke-width="1.05"/><path d="M2.6 9.6 H10.4" stroke="#b01010" stroke-width="1"/></svg></div>
<div class="t" style="left:103.00000000000001px;width:30.434782608695652px;overflow:hidden;top:181.66999999999996px;color:#111">FB</div>
<div class="t r num" style="left:130.8px;width:77.39999999999998px;text-align:right;top:181.66999999999996px;color:#111">1,00</div>
<div class="t" style="left:212.89999999999998px;width:51.84782608695651px;overflow:hidden;top:181.66999999999996px;color:#111">außen</div>
<div class="t" style="left:317.2px;width:125.43478260869563px;overflow:hidden;top:181.66999999999996px;color:#111">Boden OG1-1</div>
<div class="t num" style="left:459.7px;width:25.217391304347874px;overflow:hidden;top:181.66999999999996px;color:#111">0</div>
<div class="t r num" style="left:482.70000000000005px;width:57.299999999999955px;text-align:right;top:181.66999999999996px;color:#111">3,85</div>
<div class="t r num" style="left:542.5px;width:47.5px;text-align:right;top:181.66999999999996px;color:#111">3,45</div>
<div class="t r num" style="left:592.5px;width:47.799999999999955px;text-align:right;top:181.66999999999996px;color:#111">13,27</div>
<div class="t r num" style="left:642.8px;width:45.10000000000002px;text-align:right;top:181.66999999999996px;color:#111">13,27</div>
<div class="t r num" style="left:740.6px;width:78.30000000000007px;text-align:right;top:181.66999999999996px;color:#111">0,05</div>
<div class="t r num" style="left:821.4000000000001px;width:44.399999999999864px;text-align:right;top:181.66999999999996px;color:#111">0,24</div>
<div class="t r num" style="left:868.3px;width:37.600000000000136px;text-align:right;top:181.66999999999996px;color:#111">0,00</div>
<div style="left:0;top:195.79999999999995px;width:10.599999999999994px;height:16.13px;background:#f5f5f5"></div>
<div style="left:10.599999999999994px;top:195.79999999999995px;width:971.9999999999999px;height:16.13px;background:#3797f6"></div>
<div style="left:315px;top:196.29999999999995px;width:117.39999999999998px;height:15.129999999999999px;background:#fff"></div>
<svg style="left:3px;top:199.99999999999994px" width="8" height="9" viewBox="0 0 8 9"><path d="M1 1 L5.2 4.5 L1 8" fill="none" stroke="#111" stroke-width="1.3"/><path d="M2.6 2.6 L4.2 4.5 L2.6 6.4" fill="none" stroke="#888" stroke-width="0.8"/></svg>
<div style="left:0;top:210.92999999999995px;width:982.5999999999999px;height:1px;background:#adadad"></div>
<div class="t num" style="left:12.799999999999994px;width:31.63043478260869px;overflow:hidden;top:197.79999999999995px;color:#111">4</div>
<div style="left:79.05000000000001px;top:196.59999999999997px"><svg width="14" height="14" viewBox="0 0 13 13"><path d="M2 6 L6.5 1.5 L11 6 Z" fill="#fff" stroke="#1a1a1a" stroke-width="1.1" stroke-linejoin="round"/><rect x="2" y="6.2" width="9" height="2.8" rx="0.8" fill="#fff" stroke="#1a1a1a" stroke-width="1.05"/><rect x="2" y="9.2" width="9" height="3" rx="0.8" fill="#fff" stroke="#1a1a1a" stroke-width="1.05"/><path d="M1.6 7 V8.4 M11.4 7 V8.4 M1.6 10 V11.4 M11.4 10 V11.4" stroke="#e02a2a" stroke-width="1"/></svg></div>
<div class="t" style="left:103.00000000000001px;width:30.434782608695652px;overflow:hidden;top:197.79999999999995px;color:#111">WA</div>
<div class="t r num" style="left:130.8px;width:77.39999999999998px;text-align:right;top:197.79999999999995px;color:#111">1,00</div>
<div class="t" style="left:212.89999999999998px;width:51.84782608695651px;overflow:hidden;top:197.79999999999995px;color:#111">außen</div>
<div class="t" style="left:317.2px;width:125.43478260869563px;overflow:hidden;top:197.79999999999995px;color:#111">AW 010</div>
<div class="t" style="left:434.59999999999997px;width:25.108695652173935px;overflow:hidden;top:197.79999999999995px;color:#111">N</div>
<div class="t num" style="left:459.7px;width:25.217391304347874px;overflow:hidden;top:197.79999999999995px;color:#111">90</div>
<div class="t r num" style="left:482.70000000000005px;width:57.299999999999955px;text-align:right;top:197.79999999999995px;color:#111">2,80</div>
<div class="t r num" style="left:542.5px;width:47.5px;text-align:right;top:197.79999999999995px;color:#111">9,66</div>
<div class="t r num" style="left:592.5px;width:47.799999999999955px;text-align:right;top:197.79999999999995px;color:#111">27,04</div>
<div class="t r num" style="left:642.8px;width:45.10000000000002px;text-align:right;top:197.79999999999995px;color:#111">27,04</div>
<div class="t" style="left:692.6px;width:52.391304347826136px;overflow:hidden;top:197.79999999999995px;color:#111">AW a U=0,</div>
<div class="t r num" style="left:740.6px;width:78.30000000000007px;text-align:right;top:197.79999999999995px;color:#111">0,05</div>
<div class="t r num" style="left:821.4000000000001px;width:44.399999999999864px;text-align:right;top:197.79999999999995px;color:#111">0,24</div>
<div class="t r num" style="left:868.3px;width:37.600000000000136px;text-align:right;top:197.79999999999995px;color:#111">234,80</div>
<div style="left:0;top:211.92999999999995px;width:10.599999999999994px;height:16.13px;background:#f5f5f5"></div>
<div style="left:10.599999999999994px;top:211.92999999999995px;width:971.9999999999999px;height:16.13px;background:#dcebd8"></div>
<div style="left:0;top:227.05999999999995px;width:982.5999999999999px;height:1px;background:#adadad"></div>
<div class="t num" style="left:12.799999999999994px;width:31.63043478260869px;overflow:hidden;top:213.92999999999995px;color:#111">5</div>
<div style="left:79.05000000000001px;top:212.72999999999996px"><svg width="14" height="14" viewBox="0 0 13 13"><path d="M2 6 L6.5 1.5 L11 6 Z" fill="#fff" stroke="#1a1a1a" stroke-width="1.1" stroke-linejoin="round"/><rect x="2" y="6.2" width="9" height="2.8" rx="0.8" fill="#fff" stroke="#1a1a1a" stroke-width="1.05"/><rect x="2" y="9.2" width="9" height="3" rx="0.8" fill="#fff" stroke="#1a1a1a" stroke-width="1.05"/><path d="M1.6 7 V8.4 M11.4 7 V8.4 M1.6 10 V11.4 M11.4 10 V11.4" stroke="#e02a2a" stroke-width="1"/></svg></div>
<div class="t" style="left:103.00000000000001px;width:30.434782608695652px;overflow:hidden;top:213.92999999999995px;color:#111">WA</div>
<div class="t r num" style="left:130.8px;width:77.39999999999998px;text-align:right;top:213.92999999999995px;color:#111">1,00</div>
<div class="t" style="left:212.89999999999998px;width:51.84782608695651px;overflow:hidden;top:213.92999999999995px;color:#111">außen</div>
<div class="t" style="left:317.2px;width:125.43478260869563px;overflow:hidden;top:213.92999999999995px;color:#111">AW 007</div>
<div class="t" style="left:434.59999999999997px;width:25.108695652173935px;overflow:hidden;top:213.92999999999995px;color:#111">W</div>
<div class="t num" style="left:459.7px;width:25.217391304347874px;overflow:hidden;top:213.92999999999995px;color:#111">90</div>
<div class="t r num" style="left:482.70000000000005px;width:57.299999999999955px;text-align:right;top:213.92999999999995px;color:#111">2,80</div>
<div class="t r num" style="left:542.5px;width:47.5px;text-align:right;top:213.92999999999995px;color:#111">12,24</div>
<div class="t r num" style="left:592.5px;width:47.799999999999955px;text-align:right;top:213.92999999999995px;color:#111">34,28</div>
<div class="t r num" style="left:642.8px;width:45.10000000000002px;text-align:right;top:213.92999999999995px;color:#111">25,28</div>
<div class="t" style="left:692.6px;width:52.391304347826136px;overflow:hidden;top:213.92999999999995px;color:#111">AW a U=0,</div>
<div class="t r num" style="left:740.6px;width:78.30000000000007px;text-align:right;top:213.92999999999995px;color:#111">0,05</div>
<div class="t r num" style="left:821.4000000000001px;width:44.399999999999864px;text-align:right;top:213.92999999999995px;color:#111">0,24</div>
<div class="t r num" style="left:868.3px;width:37.600000000000136px;text-align:right;top:213.92999999999995px;color:#111">219,50</div>
<div style="left:0;top:228.06px;width:10.599999999999994px;height:16.13px;background:#f5f5f5"></div>
<div style="left:10.599999999999994px;top:228.06px;width:971.9999999999999px;height:16.13px;background:#dcebd8"></div>
<div style="left:0;top:243.19px;width:982.5999999999999px;height:1px;background:#adadad"></div>
<div class="t num" style="left:12.799999999999994px;width:31.63043478260869px;overflow:hidden;top:230.06px;color:#111">8</div>
<div style="left:79.05000000000001px;top:228.86px"><svg width="14" height="14" viewBox="0 0 13 13"><path d="M2 6 L6.5 1.5 L11 6 Z" fill="#fff" stroke="#1a1a1a" stroke-width="1.1" stroke-linejoin="round"/><rect x="2" y="6.2" width="9" height="2.8" rx="0.8" fill="#fff" stroke="#1a1a1a" stroke-width="1.05"/><rect x="2" y="9.2" width="9" height="3" rx="0.8" fill="#fff" stroke="#1a1a1a" stroke-width="1.05"/><path d="M1.6 7 V8.4 M11.4 7 V8.4 M1.6 10 V11.4 M11.4 10 V11.4" stroke="#e02a2a" stroke-width="1"/></svg></div>
<div class="t" style="left:103.00000000000001px;width:30.434782608695652px;overflow:hidden;top:230.06px;color:#111">WA</div>
<div class="t r num" style="left:130.8px;width:77.39999999999998px;text-align:right;top:230.06px;color:#111">1,00</div>
<div class="t" style="left:212.89999999999998px;width:51.84782608695651px;overflow:hidden;top:230.06px;color:#111">außen</div>
<div class="t" style="left:317.2px;width:125.43478260869563px;overflow:hidden;top:230.06px;color:#111">AW 008</div>
<div class="t" style="left:434.59999999999997px;width:25.108695652173935px;overflow:hidden;top:230.06px;color:#111">S</div>
<div class="t num" style="left:459.7px;width:25.217391304347874px;overflow:hidden;top:230.06px;color:#111">90</div>
<div class="t r num" style="left:482.70000000000005px;width:57.299999999999955px;text-align:right;top:230.06px;color:#111">2,80</div>
<div class="t r num" style="left:542.5px;width:47.5px;text-align:right;top:230.06px;color:#111">9,66</div>
<div class="t r num" style="left:592.5px;width:47.799999999999955px;text-align:right;top:230.06px;color:#111">27,04</div>
<div class="t r num" style="left:642.8px;width:45.10000000000002px;text-align:right;top:230.06px;color:#111">22,04</div>
<div class="t" style="left:692.6px;width:52.391304347826136px;overflow:hidden;top:230.06px;color:#111">AW a U=0,</div>
<div class="t r num" style="left:740.6px;width:78.30000000000007px;text-align:right;top:230.06px;color:#111">0,05</div>
<div class="t r num" style="left:821.4000000000001px;width:44.399999999999864px;text-align:right;top:230.06px;color:#111">0,24</div>
<div class="t r num" style="left:868.3px;width:37.600000000000136px;text-align:right;top:230.06px;color:#111">191,40</div>
<div style="left:0;top:244.19px;width:10.599999999999994px;height:16.13px;background:#f5f5f5"></div>
<div style="left:10.599999999999994px;top:244.19px;width:971.9999999999999px;height:16.13px;background:#dcebd8"></div>
<div style="left:0;top:259.32px;width:982.5999999999999px;height:1px;background:#adadad"></div>
<div class="t num" style="left:12.799999999999994px;width:31.63043478260869px;overflow:hidden;top:246.19px;color:#111">11</div>
<div style="left:79.05000000000001px;top:244.99px"><svg width="14" height="14" viewBox="0 0 13 13"><path d="M2 6 L6.5 1.5 L11 6 Z" fill="#fff" stroke="#1a1a1a" stroke-width="1.1" stroke-linejoin="round"/><rect x="2" y="6.2" width="9" height="2.8" rx="0.8" fill="#fff" stroke="#1a1a1a" stroke-width="1.05"/><rect x="2" y="9.2" width="9" height="3" rx="0.8" fill="#fff" stroke="#1a1a1a" stroke-width="1.05"/><path d="M1.6 7 V8.4 M11.4 7 V8.4 M1.6 10 V11.4 M11.4 10 V11.4" stroke="#e02a2a" stroke-width="1"/></svg></div>
<div class="t" style="left:103.00000000000001px;width:30.434782608695652px;overflow:hidden;top:246.19px;color:#111">WA</div>
<div class="t r num" style="left:130.8px;width:77.39999999999998px;text-align:right;top:246.19px;color:#111">1,00</div>
<div class="t" style="left:212.89999999999998px;width:51.84782608695651px;overflow:hidden;top:246.19px;color:#111">außen</div>
<div class="t" style="left:317.2px;width:125.43478260869563px;overflow:hidden;top:246.19px;color:#111">AW 009</div>
<div class="t" style="left:434.59999999999997px;width:25.108695652173935px;overflow:hidden;top:246.19px;color:#111">O</div>
<div class="t num" style="left:459.7px;width:25.217391304347874px;overflow:hidden;top:246.19px;color:#111">90</div>
<div class="t r num" style="left:482.70000000000005px;width:57.299999999999955px;text-align:right;top:246.19px;color:#111">2,80</div>
<div class="t r num" style="left:542.5px;width:47.5px;text-align:right;top:246.19px;color:#111">12,24</div>
<div class="t r num" style="left:592.5px;width:47.799999999999955px;text-align:right;top:246.19px;color:#111">34,28</div>
<div class="t r num" style="left:642.8px;width:45.10000000000002px;text-align:right;top:246.19px;color:#111">24,22</div>
<div class="t" style="left:692.6px;width:52.391304347826136px;overflow:hidden;top:246.19px;color:#111">AW a U=0,</div>
<div class="t r num" style="left:740.6px;width:78.30000000000007px;text-align:right;top:246.19px;color:#111">0,05</div>
<div class="t r num" style="left:821.4000000000001px;width:44.399999999999864px;text-align:right;top:246.19px;color:#111">0,24</div>
<div class="t r num" style="left:868.3px;width:37.600000000000136px;text-align:right;top:246.19px;color:#111">210,30</div>
<div style="left:0;top:260.32px;width:10.599999999999994px;height:16.13px;background:#f5f5f5"></div>
<div style="left:10.599999999999994px;top:260.32px;width:971.9999999999999px;height:16.13px;background:#efede2"></div>
<div style="left:0;top:275.45px;width:982.5999999999999px;height:1px;background:#adadad"></div>
<div class="t num" style="left:12.799999999999994px;width:31.63043478260869px;overflow:hidden;top:262.32px;color:#111">6</div>
<div class="t num" style="left:43.89999999999999px;width:34.56521739130436px;overflow:hidden;top:262.32px;color:#111">5</div>
<div style="left:79.05000000000001px;top:261.12px"><svg width="14" height="14" viewBox="0 0 13 13"><path d="M1.8 12.2 V5.2 Q1.8 1.7 6.5 1.7 Q11.2 1.7 11.2 5.2 V12.2" fill="#fff" stroke="#1a1a1a" stroke-width="1.1"/><path d="M1.8 5.2 H11.2 M1.8 11.6 H11.2" stroke="#1a1a1a" stroke-width="1"/><rect x="3.2" y="7.2" width="2.6" height="2.4" fill="#fff" stroke="#e23a3a" stroke-width="0.9"/><rect x="7.2" y="7.2" width="2.6" height="2.4" fill="#fff" stroke="#e23a3a" stroke-width="0.9"/></svg></div>
<div class="t" style="left:103.00000000000001px;width:30.434782608695652px;overflow:hidden;top:262.32px;color:#111">FA</div>
<div class="t r num" style="left:130.8px;width:77.39999999999998px;text-align:right;top:262.32px;color:#111">1,00</div>
<div class="t" style="left:212.89999999999998px;width:51.84782608695651px;overflow:hidden;top:262.32px;color:#111">außen</div>
<div class="t" style="left:317.2px;width:125.43478260869563px;overflow:hidden;top:262.32px;color:#111"><span style="padding-left:9px">- F 008</span></div>
<div class="t" style="left:434.59999999999997px;width:25.108695652173935px;overflow:hidden;top:262.32px;color:#111">W</div>
<div class="t num" style="left:459.7px;width:25.217391304347874px;overflow:hidden;top:262.32px;color:#111">90</div>
<div class="t r num" style="left:482.70000000000005px;width:57.299999999999955px;text-align:right;top:262.32px;color:#111">2,25</div>
<div class="t r num" style="left:542.5px;width:47.5px;text-align:right;top:262.32px;color:#111">2,00</div>
<div class="t r num" style="left:592.5px;width:47.799999999999955px;text-align:right;top:262.32px;color:#111">4,50</div>
<div class="t r num" style="left:642.8px;width:45.10000000000002px;text-align:right;top:262.32px;color:#111">4,50</div>
<div class="t r num" style="left:740.6px;width:78.30000000000007px;text-align:right;top:262.32px;color:#111">0,05</div>
<div class="t r num" style="left:821.4000000000001px;width:44.399999999999864px;text-align:right;top:262.32px;color:#111">1,30</div>
<div class="t r num" style="left:868.3px;width:37.600000000000136px;text-align:right;top:262.32px;color:#111">181,90</div>
<div style="left:0;top:276.45px;width:10.599999999999994px;height:16.13px;background:#f5f5f5"></div>
<div style="left:10.599999999999994px;top:276.45px;width:971.9999999999999px;height:16.13px;background:#efede2"></div>
<div style="left:0;top:291.58px;width:982.5999999999999px;height:1px;background:#adadad"></div>
<div class="t num" style="left:12.799999999999994px;width:31.63043478260869px;overflow:hidden;top:278.45px;color:#111">7</div>
<div class="t num" style="left:43.89999999999999px;width:34.56521739130436px;overflow:hidden;top:278.45px;color:#111">5</div>
<div style="left:79.05000000000001px;top:277.25px"><svg width="14" height="14" viewBox="0 0 13 13"><path d="M1.8 12.2 V5.2 Q1.8 1.7 6.5 1.7 Q11.2 1.7 11.2 5.2 V12.2" fill="#fff" stroke="#1a1a1a" stroke-width="1.1"/><path d="M1.8 5.2 H11.2 M1.8 11.6 H11.2" stroke="#1a1a1a" stroke-width="1"/><rect x="3.2" y="7.2" width="2.6" height="2.4" fill="#fff" stroke="#e23a3a" stroke-width="0.9"/><rect x="7.2" y="7.2" width="2.6" height="2.4" fill="#fff" stroke="#e23a3a" stroke-width="0.9"/></svg></div>
<div class="t" style="left:103.00000000000001px;width:30.434782608695652px;overflow:hidden;top:278.45px;color:#111">FA</div>
<div class="t r num" style="left:130.8px;width:77.39999999999998px;text-align:right;top:278.45px;color:#111">1,00</div>
<div class="t" style="left:212.89999999999998px;width:51.84782608695651px;overflow:hidden;top:278.45px;color:#111">außen</div>
<div class="t" style="left:317.2px;width:125.43478260869563px;overflow:hidden;top:278.45px;color:#111"><span style="padding-left:9px">- F 009</span></div>
<div class="t" style="left:434.59999999999997px;width:25.108695652173935px;overflow:hidden;top:278.45px;color:#111">W</div>
<div class="t num" style="left:459.7px;width:25.217391304347874px;overflow:hidden;top:278.45px;color:#111">90</div>
<div class="t r num" style="left:482.70000000000005px;width:57.299999999999955px;text-align:right;top:278.45px;color:#111">2,25</div>
<div class="t r num" style="left:542.5px;width:47.5px;text-align:right;top:278.45px;color:#111">2,00</div>
<div class="t r num" style="left:592.5px;width:47.799999999999955px;text-align:right;top:278.45px;color:#111">4,50</div>
<div class="t r num" style="left:642.8px;width:45.10000000000002px;text-align:right;top:278.45px;color:#111">4,50</div>
<div class="t r num" style="left:740.6px;width:78.30000000000007px;text-align:right;top:278.45px;color:#111">0,05</div>
<div class="t r num" style="left:821.4000000000001px;width:44.399999999999864px;text-align:right;top:278.45px;color:#111">1,30</div>
<div class="t r num" style="left:868.3px;width:37.600000000000136px;text-align:right;top:278.45px;color:#111">181,90</div>
<div style="left:0px;top:34.5px;width:1px;height:254.8px;background:#acacac"></div>
<div style="left:10.099999999999994px;top:34.5px;width:1px;height:254.8px;background:#acacac"></div>
<div style="left:41.19999999999999px;top:34.5px;width:1px;height:254.8px;background:#acacac"></div>
<div style="left:75.0px;top:34.5px;width:1px;height:254.8px;background:#acacac"></div>
<div style="left:100.30000000000001px;top:34.5px;width:1px;height:254.8px;background:#acacac"></div>
<div style="left:130.3px;top:34.5px;width:1px;height:254.8px;background:#acacac"></div>
<div style="left:210.2px;top:34.5px;width:1px;height:254.8px;background:#acacac"></div>
<div style="left:259.9px;top:34.5px;width:1px;height:254.8px;background:#acacac"></div>
<div style="left:314.5px;top:34.5px;width:1px;height:254.8px;background:#acacac"></div>
<div style="left:431.9px;top:34.5px;width:1px;height:254.8px;background:#acacac"></div>
<div style="left:457.0px;top:34.5px;width:1px;height:254.8px;background:#acacac"></div>
<div style="left:482.20000000000005px;top:34.5px;width:1px;height:254.8px;background:#acacac"></div>
<div style="left:542.0px;top:34.5px;width:1px;height:254.8px;background:#acacac"></div>
<div style="left:592.0px;top:34.5px;width:1px;height:254.8px;background:#acacac"></div>
<div style="left:642.3px;top:34.5px;width:1px;height:254.8px;background:#acacac"></div>
<div style="left:689.9px;top:34.5px;width:1px;height:254.8px;background:#acacac"></div>
<div style="left:740.1px;top:34.5px;width:1px;height:254.8px;background:#acacac"></div>
<div style="left:820.9000000000001px;top:34.5px;width:1px;height:254.8px;background:#acacac"></div>
<div style="left:867.8px;top:34.5px;width:1px;height:254.8px;background:#acacac"></div>
<div style="left:907.9000000000001px;top:34.5px;width:1px;height:254.8px;background:#acacac"></div>
<div style="left:982.0999999999999px;top:34.5px;width:1px;height:254.8px;background:#acacac"></div>
</div>
<div style="left:203px;top:117.5px;width:1px;height:289.3px;background:#bdbdbd"></div>
<div style="left:203px;top:117.5px;width:996.5px;height:1px;background:#c8c8c8"></div>
<div style="left:1185.6px;top:117.5px;width:14px;height:289.3px;background:#fbfbfb"></div>
<div style="left:1185.6px;top:117.5px;width:14px;height:15px;background:#f7f7f7;border-right:1px solid #cfcfcf;border-bottom:1px solid #cfcfcf"></div>
<svg style="left:1188.5px;top:122.5px" width="8" height="5" viewBox="0 0 8 5"><path d="M0.3 4.5 L4 0.6 L7.7 4.5Z" fill="#111"/></svg>
<div style="left:1185.6px;top:132.5px;width:14px;height:185.5px;background:#ededed;border-left:1px solid #dcdcdc;border-right:1px solid #c8c8c8;border-bottom:1px solid #c2c2c2"></div>
<div style="left:1185.6px;top:392px;width:14px;height:14.8px;background:#f7f7f7;border-right:1px solid #cfcfcf;border-bottom:1px solid #bdbdbd"></div>
<svg style="left:1189px;top:397.3px" width="8" height="5" viewBox="0 0 8 5"><path d="M0.3 0.5 L4 4.4 L7.7 0.5Z" fill="#111"/></svg>
<div style="left:202.5px;top:415px;width:999px;height:1px;background:#c4c4c4"></div>
<div style="left:202px;top:423px;width:279.5px;height:280.5px;background:#fff;border:1px solid #d6d6d6"></div>
<div style="left:203px;top:424px;width:277.5px;height:18px;background:#e9eaee"></div>
<div class="t ns" style="left:208.5px;top:427.2px;font-weight:bold;font-size:10px;color:#111">Raum-Ergebnisse - OG1-R1 / Wohnraum</div>
<div style="left:487px;top:423px;width:1px;height:289px;background:#a8a8a8"></div>
<div class="t " style="left:213.5px;top:448.0px;">Norminnentemperatur</div>
<div class="t " style="left:345.5px;top:449.0px;transform:scaleX(0.92)"><span style="font-size:10px">θ</span><sub style="font-size:7.8px;vertical-align:-2px;margin-left:0.3px">int</sub></div>
<div style="left:374px;top:444.3px;width:43px;height:18px;background:#fff;border:1px solid #d9d9d9"></div>
<div class="t r num" style="left:374px;width:40.5px;text-align:right;top:448.5px;color:#a0a0a0">20,0</div>
<div class="t " style="left:419px;top:448.0px;">[°C]</div>
<div class="t " style="left:213.5px;top:468.5px;">Raumfläche</div>
<div class="t " style="left:345.5px;top:469.5px;transform:scaleX(0.92)"><span style="font-size:10px">A</span><sub style="font-size:7.8px;vertical-align:-2px;margin-left:0.3px">R</sub></div>
<div style="left:374px;top:464.8px;width:43px;height:18px;background:#fff;border:1px solid #d9d9d9"></div>
<div class="t r num" style="left:374px;width:40.5px;text-align:right;top:469.0px;color:#a0a0a0">102,1</div>
<div class="t " style="left:419px;top:468.5px;">[m²]</div>
<div class="t " style="left:213.5px;top:489.0px;">Raumvolumen</div>
<div class="t " style="left:345.5px;top:490.0px;transform:scaleX(0.92)"><span style="font-size:10px">V</span><sub style="font-size:7.8px;vertical-align:-2px;margin-left:0.3px">R</sub></div>
<div style="left:374px;top:485.3px;width:43px;height:18px;background:#fff;border:1px solid #d9d9d9"></div>
<div class="t r num" style="left:374px;width:40.5px;text-align:right;top:489.5px;color:#a0a0a0">265,6</div>
<div class="t " style="left:419px;top:489.0px;">[m³]</div>
<div class="t ns" style="left:213.5px;top:507.3px;font-weight:bold;font-size:10px;color:#8b1a1a">Heizlast</div>
<div class="t " style="left:213.5px;top:526.5px;">Transmissionswärmeverlust</div>
<div class="t " style="left:347px;top:527.3px;transform:scaleX(0.92)"><b style="font-size:10.5px">Φ</b><sub style="font-size:7.8px;vertical-align:-2px;margin-left:0.3px">T</sub></div>
<div style="left:372px;top:522.8px;width:42px;height:18px;background:#fff;border:1px solid #d9d9d9"></div>
<div class="t r num" style="left:372px;width:39.5px;text-align:right;top:527.0px;color:#a0a0a0">2028</div>
<div class="t " style="left:416.8px;top:526.5px;">[W]</div>
<div class="t " style="left:213.5px;top:547.0px;">Lüftungswärmeverlust</div>
<div class="t " style="left:347px;top:547.8px;transform:scaleX(0.92)"><b style="font-size:10.5px">Φ</b><sub style="font-size:7.8px;vertical-align:-2px;margin-left:0.3px">V</sub></div>
<div style="left:372px;top:543.3px;width:42px;height:18px;background:#fff;border:1px solid #d9d9d9"></div>
<div class="t r num" style="left:372px;width:39.5px;text-align:right;top:547.5px;color:#a0a0a0">1352</div>
<div class="t " style="left:416.8px;top:547.0px;">[W]</div>
<div class="t " style="left:213.5px;top:567.5px;">Netto - Heizlast</div>
<div class="t " style="left:347px;top:568.3px;transform:scaleX(0.92)"><b style="font-size:10.5px">Φ</b><sub style="font-size:7.8px;vertical-align:-2px;margin-left:0.3px">Net</sub></div>
<div style="left:372px;top:563.8px;width:42px;height:18px;background:#fff;border:1px solid #d9d9d9"></div>
<div class="t r num" style="left:372px;width:39.5px;text-align:right;top:568.0px;color:#a0a0a0">3380</div>
<div class="t " style="left:416.8px;top:567.5px;">[W]</div>
<div class="t " style="left:213.5px;top:588.0px;">Zusatz - Aufheizleistung</div>
<div class="t " style="left:347px;top:588.8px;transform:scaleX(0.92)"><b style="font-size:10.5px">Φ</b><sub style="font-size:7.8px;vertical-align:-2px;margin-left:0.3px">RH</sub></div>
<div style="left:372px;top:584.3px;width:42px;height:18px;background:#fff;border:1px solid #d9d9d9"></div>
<div class="t r num" style="left:372px;width:39.5px;text-align:right;top:588.5px;color:#a0a0a0">0</div>
<div class="t " style="left:416.8px;top:588.0px;">[W]</div>
<div class="t " style="left:213.5px;top:608.5px;">Auslegungs-Heizleistung</div>
<div class="t " style="left:347px;top:609.3px;transform:scaleX(0.92)"><b style="font-size:10.5px">Φ</b><sub style="font-size:7.8px;vertical-align:-2px;margin-left:0.3px">HL</sub></div>
<div style="left:372px;top:604.8px;width:42px;height:18px;background:#fff;border:1px solid #d9d9d9"></div>
<div class="t r num" style="left:372px;width:39.5px;text-align:right;top:609.0px;color:#a0a0a0">3380</div>
<div class="t " style="left:416.8px;top:608.5px;">[W]</div>
<div style="left:494.5px;top:423px;width:707.5px;height:280.5px;background:#fff;border:1px solid #d6d6d6"></div>
<div style="left:495.5px;top:424px;width:705.5px;height:18px;background:#e9eaee"></div>
<div class="t ns" style="left:500.5px;top:427.2px;font-weight:bold;font-size:10px;color:#111">Bauteile</div>
<div style="left:0;top:0;width:1207px;height:714px"><svg style="left:0;top:0" width="1207" height="714" viewBox="0 0 1207 714"><line x1="561" y1="597.45" x2="1188" y2="597.45" stroke="#8a8a8a" stroke-width="1" stroke-dasharray="2.6 2.4"/><line x1="561" y1="571.95" x2="1188" y2="571.95" stroke="#8a8a8a" stroke-width="1" stroke-dasharray="2.6 2.4"/><line x1="561" y1="546.45" x2="1188" y2="546.45" stroke="#8a8a8a" stroke-width="1" stroke-dasharray="2.6 2.4"/><line x1="561" y1="520.95" x2="1188" y2="520.95" stroke="#8a8a8a" stroke-width="1" stroke-dasharray="2.6 2.4"/><line x1="561" y1="495.45" x2="1188" y2="495.45" stroke="#8a8a8a" stroke-width="1" stroke-dasharray="2.6 2.4"/><line x1="561" y1="469.95" x2="1188" y2="469.95" stroke="#8a8a8a" stroke-width="1" stroke-dasharray="2.6 2.4"/><line x1="585.40" y1="610.2" x2="585.40" y2="614.2" stroke="#888" stroke-width="1"/><text x="0" y="0" transform="translate(587.90,617.8) rotate(-90)" text-anchor="end" font-family="Liberation Sans" font-size="9.5" fill="#111">Decke OG1 002-4</text><line x1="615.82" y1="610.2" x2="615.82" y2="614.2" stroke="#888" stroke-width="1"/><text x="0" y="0" transform="translate(618.32,617.8) rotate(-90)" text-anchor="end" font-family="Liberation Sans" font-size="9.5" fill="#111">Decke OG1 002-5</text><line x1="646.24" y1="610.2" x2="646.24" y2="614.2" stroke="#888" stroke-width="1"/><text x="0" y="0" transform="translate(648.74,617.8) rotate(-90)" text-anchor="end" font-family="Liberation Sans" font-size="9.5" fill="#111">Decke OG1 002-6</text><rect x="664.86" y="563.85" width="23.6" height="46.35" fill="#ff8080" stroke="#1a0000" stroke-width="1.3"/><line x1="676.66" y1="610.2" x2="676.66" y2="614.2" stroke="#888" stroke-width="1"/><text x="0" y="0" transform="translate(679.16,617.8) rotate(-90)" text-anchor="end" font-family="Liberation Sans" font-size="9.5" fill="#111">Decke EG 002-7</text><rect x="695.28" y="594.65" width="23.6" height="15.55" fill="#ff8080" stroke="#1a0000" stroke-width="1.3"/><line x1="707.08" y1="610.2" x2="707.08" y2="614.2" stroke="#888" stroke-width="1"/><text x="0" y="0" transform="translate(709.58,617.8) rotate(-90)" text-anchor="end" font-family="Liberation Sans" font-size="9.5" fill="#111">Decke EG 002-8</text><rect x="725.70" y="563.85" width="23.6" height="46.35" fill="#ff8080" stroke="#1a0000" stroke-width="1.3"/><line x1="737.50" y1="610.2" x2="737.50" y2="614.2" stroke="#888" stroke-width="1"/><text x="0" y="0" transform="translate(740.00,617.8) rotate(-90)" text-anchor="end" font-family="Liberation Sans" font-size="9.5" fill="#111">Decke EG 002-9</text><rect x="756.12" y="608.03" width="23.6" height="2.17" fill="#ff8080" stroke="#1a0000" stroke-width="1.3"/><line x1="767.92" y1="610.2" x2="767.92" y2="614.2" stroke="#888" stroke-width="1"/><text x="0" y="0" transform="translate(770.42,617.8) rotate(-90)" text-anchor="end" font-family="Liberation Sans" font-size="9.5" fill="#111">Decke EG 002-10</text><rect x="786.54" y="596.24" width="23.6" height="13.96" fill="#ff8080" stroke="#1a0000" stroke-width="1.3"/><line x1="798.34" y1="610.2" x2="798.34" y2="614.2" stroke="#888" stroke-width="1"/><text x="0" y="0" transform="translate(800.84,617.8) rotate(-90)" text-anchor="end" font-family="Liberation Sans" font-size="9.5" fill="#111">Decke EG 002-11</text><rect x="816.96" y="607.52" width="23.6" height="2.68" fill="#ff8080" stroke="#1a0000" stroke-width="1.3"/><line x1="828.76" y1="610.2" x2="828.76" y2="614.2" stroke="#888" stroke-width="1"/><text x="0" y="0" transform="translate(831.26,617.8) rotate(-90)" text-anchor="end" font-family="Liberation Sans" font-size="9.5" fill="#111">Decke EG 002-12</text><rect x="847.38" y="460.52" width="23.6" height="149.69" fill="#ff0000" stroke="#1a0000" stroke-width="1.3"/><line x1="859.18" y1="610.2" x2="859.18" y2="614.2" stroke="#888" stroke-width="1"/><text x="0" y="0" transform="translate(861.68,617.8) rotate(-90)" text-anchor="end" font-family="Liberation Sans" font-size="9.5" fill="#111">AW 010</text><rect x="877.80" y="470.27" width="23.6" height="139.93" fill="#ff8080" stroke="#1a0000" stroke-width="1.3"/><line x1="889.60" y1="610.2" x2="889.60" y2="614.2" stroke="#888" stroke-width="1"/><text x="0" y="0" transform="translate(892.10,617.8) rotate(-90)" text-anchor="end" font-family="Liberation Sans" font-size="9.5" fill="#111">AW 007</text><rect x="908.22" y="488.18" width="23.6" height="122.02" fill="#ff8080" stroke="#1a0000" stroke-width="1.3"/><line x1="920.02" y1="610.2" x2="920.02" y2="614.2" stroke="#888" stroke-width="1"/><text x="0" y="0" transform="translate(922.52,617.8) rotate(-90)" text-anchor="end" font-family="Liberation Sans" font-size="9.5" fill="#111">AW 008</text><rect x="938.64" y="476.13" width="23.6" height="134.07" fill="#ff8080" stroke="#1a0000" stroke-width="1.3"/><line x1="950.44" y1="610.2" x2="950.44" y2="614.2" stroke="#888" stroke-width="1"/><text x="0" y="0" transform="translate(952.94,617.8) rotate(-90)" text-anchor="end" font-family="Liberation Sans" font-size="9.5" fill="#111">AW 009</text><rect x="969.06" y="494.24" width="23.6" height="115.96" fill="#ff8080" stroke="#1a0000" stroke-width="1.3"/><line x1="980.86" y1="610.2" x2="980.86" y2="614.2" stroke="#888" stroke-width="1"/><text x="0" y="0" transform="translate(983.36,617.8) rotate(-90)" text-anchor="end" font-family="Liberation Sans" font-size="9.5" fill="#111">F 008</text><rect x="999.48" y="494.24" width="23.6" height="115.96" fill="#ff8080" stroke="#1a0000" stroke-width="1.3"/><line x1="1011.28" y1="610.2" x2="1011.28" y2="614.2" stroke="#888" stroke-width="1"/><text x="0" y="0" transform="translate(1013.78,617.8) rotate(-90)" text-anchor="end" font-family="Liberation Sans" font-size="9.5" fill="#111">F 009</text><rect x="1029.90" y="546.26" width="23.6" height="63.94" fill="#ff8080" stroke="#1a0000" stroke-width="1.3"/><line x1="1041.70" y1="610.2" x2="1041.70" y2="614.2" stroke="#888" stroke-width="1"/><text x="0" y="0" transform="translate(1044.20,617.8) rotate(-90)" text-anchor="end" font-family="Liberation Sans" font-size="9.5" fill="#111">F 003</text><rect x="1060.32" y="546.26" width="23.6" height="63.94" fill="#ff8080" stroke="#1a0000" stroke-width="1.3"/><line x1="1072.12" y1="610.2" x2="1072.12" y2="614.2" stroke="#888" stroke-width="1"/><text x="0" y="0" transform="translate(1074.62,617.8) rotate(-90)" text-anchor="end" font-family="Liberation Sans" font-size="9.5" fill="#111">F 004</text><rect x="1090.74" y="508.65" width="23.6" height="101.55" fill="#ff8080" stroke="#1a0000" stroke-width="1.3"/><line x1="1102.54" y1="610.2" x2="1102.54" y2="614.2" stroke="#888" stroke-width="1"/><text x="0" y="0" transform="translate(1105.04,617.8) rotate(-90)" text-anchor="end" font-family="Liberation Sans" font-size="9.5" fill="#111">F 005</text><rect x="1121.16" y="508.65" width="23.6" height="101.55" fill="#ff8080" stroke="#1a0000" stroke-width="1.3"/><line x1="1132.96" y1="610.2" x2="1132.96" y2="614.2" stroke="#888" stroke-width="1"/><text x="0" y="0" transform="translate(1135.46,617.8) rotate(-90)" text-anchor="end" font-family="Liberation Sans" font-size="9.5" fill="#111">F 006</text><rect x="1151.58" y="554.74" width="23.6" height="55.46" fill="#ff8080" stroke="#1a0000" stroke-width="1.3"/><line x1="1163.38" y1="610.2" x2="1163.38" y2="614.2" stroke="#888" stroke-width="1"/><text x="0" y="0" transform="translate(1165.88,617.8) rotate(-90)" text-anchor="end" font-family="Liberation Sans" font-size="9.5" fill="#111">F 007</text><line x1="557" y1="610.20" x2="561" y2="610.20" stroke="#444" stroke-width="1"/><text x="554" y="614.00" text-anchor="end" font-family="Liberation Sans" font-size="9.6" fill="#111">0</text><line x1="557" y1="597.45" x2="561" y2="597.45" stroke="#444" stroke-width="1"/><text x="554" y="601.25" text-anchor="end" font-family="Liberation Sans" font-size="9.6" fill="#111">20</text><line x1="557" y1="584.70" x2="561" y2="584.70" stroke="#444" stroke-width="1"/><text x="554" y="588.50" text-anchor="end" font-family="Liberation Sans" font-size="9.6" fill="#111">40</text><line x1="557" y1="571.95" x2="561" y2="571.95" stroke="#444" stroke-width="1"/><text x="554" y="575.75" text-anchor="end" font-family="Liberation Sans" font-size="9.6" fill="#111">60</text><line x1="557" y1="559.20" x2="561" y2="559.20" stroke="#444" stroke-width="1"/><text x="554" y="563.00" text-anchor="end" font-family="Liberation Sans" font-size="9.6" fill="#111">80</text><line x1="557" y1="546.45" x2="561" y2="546.45" stroke="#444" stroke-width="1"/><text x="554" y="550.25" text-anchor="end" font-family="Liberation Sans" font-size="9.6" fill="#111">100</text><line x1="557" y1="533.70" x2="561" y2="533.70" stroke="#444" stroke-width="1"/><text x="554" y="537.50" text-anchor="end" font-family="Liberation Sans" font-size="9.6" fill="#111">120</text><line x1="557" y1="520.95" x2="561" y2="520.95" stroke="#444" stroke-width="1"/><text x="554" y="524.75" text-anchor="end" font-family="Liberation Sans" font-size="9.6" fill="#111">140</text><line x1="557" y1="508.20" x2="561" y2="508.20" stroke="#444" stroke-width="1"/><text x="554" y="512.00" text-anchor="end" font-family="Liberation Sans" font-size="9.6" fill="#111">160</text><line x1="557" y1="495.45" x2="561" y2="495.45" stroke="#444" stroke-width="1"/><text x="554" y="499.25" text-anchor="end" font-family="Liberation Sans" font-size="9.6" fill="#111">180</text><line x1="557" y1="482.70" x2="561" y2="482.70" stroke="#444" stroke-width="1"/><text x="554" y="486.50" text-anchor="end" font-family="Liberation Sans" font-size="9.6" fill="#111">200</text><line x1="557" y1="469.95" x2="561" y2="469.95" stroke="#444" stroke-width="1"/><text x="554" y="473.75" text-anchor="end" font-family="Liberation Sans" font-size="9.6" fill="#111">220</text><path d="M561 610.2 V455.5 H1188 V610.2" fill="none" stroke="#111" stroke-width="1.2"/><line x1="561" y1="458.5" x2="561" y2="610.2" stroke="#000" stroke-width="2.2"/><line x1="560" y1="610.2" x2="1188.5" y2="610.2" stroke="#000" stroke-width="2.2"/><text x="0" y="0" transform="translate(519,534) rotate(-90)" text-anchor="middle" font-family="Liberation Sans" font-size="10.5" fill="#111">Transmissionswärmeverlust [W]</text></svg></div></body></html>
